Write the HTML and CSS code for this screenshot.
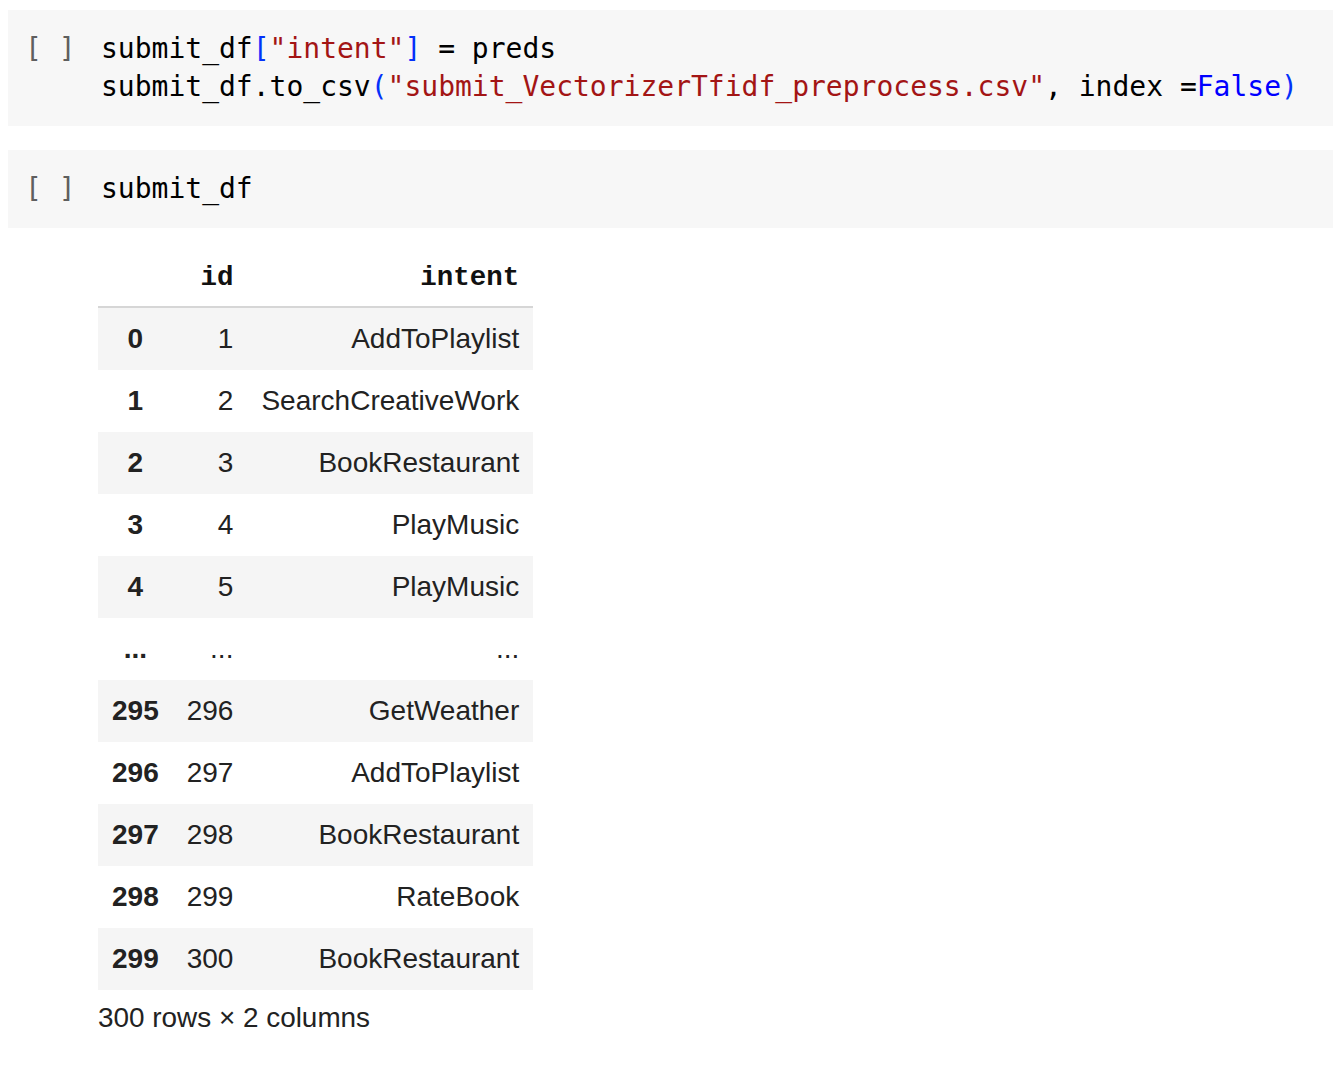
FILE: index.html
```html
<!DOCTYPE html>
<html>
<head>
<meta charset="utf-8">
<link rel="stylesheet" href="styles.css">
</head>
<body>
<div class="notebook">
  <div class="cell">
    <div class="gutter">[ ]</div>
    <div class="code">
      <div class="line">submit_df<span class="br">[</span><span class="str">"intent"</span><span class="br">]</span> = preds</div>
      <div class="line">submit_df.to_csv<span class="br">(</span><span class="str">"submit_VectorizerTfidf_preprocess.csv"</span>, index =<span class="kw">False</span><span class="br">)</span></div>
    </div>
  </div>
  <div class="cell">
    <div class="gutter">[ ]</div>
    <div class="code">
      <div class="line">submit_df</div>
    </div>
  </div>
  <div class="output">
    <table class="df">
      <thead>
        <tr><th class="idx"></th><th>id</th><th>intent</th></tr>
      </thead>
      <tbody>
        <tr><th class="idx">0</th><td>1</td><td>AddToPlaylist</td></tr>
        <tr><th class="idx">1</th><td>2</td><td>SearchCreativeWork</td></tr>
        <tr><th class="idx">2</th><td>3</td><td>BookRestaurant</td></tr>
        <tr><th class="idx">3</th><td>4</td><td>PlayMusic</td></tr>
        <tr><th class="idx">4</th><td>5</td><td>PlayMusic</td></tr>
        <tr><th class="idx">...</th><td>...</td><td>...</td></tr>
        <tr><th class="idx">295</th><td>296</td><td>GetWeather</td></tr>
        <tr><th class="idx">296</th><td>297</td><td>AddToPlaylist</td></tr>
        <tr><th class="idx">297</th><td>298</td><td>BookRestaurant</td></tr>
        <tr><th class="idx">298</th><td>299</td><td>RateBook</td></tr>
        <tr><th class="idx">299</th><td>300</td><td>BookRestaurant</td></tr>
      </tbody>
    </table>
    <p class="shape">300 rows × 2 columns</p>
  </div>
</div>
</body>
</html>
```

FILE: styles.css
```css
html, body {
  margin: 0;
  padding: 0;
  background: #ffffff;
}

.notebook {
  padding: 10px 0 0 8px;
}

.cell {
  display: flex;
  align-items: flex-start;
  background: #f7f7f7;
  padding: 20px 0 20px 0;
  margin-bottom: 24px;
}

.gutter {
  width: 93px;
  box-sizing: border-box;
  padding-left: 17px;
  font-family: "DejaVu Sans Mono", monospace;
  font-size: 28px;
  line-height: 38px;
  color: #5f5f5f;
  white-space: pre;
}

.code {
  font-family: "DejaVu Sans Mono", monospace;
  font-size: 28px;
  color: #000000;
}

.line {
  height: 38px;
  line-height: 38px;
  white-space: pre;
}

.code .str { color: #a31515; }
.code .br { color: #0431fa; }
.code .kw { color: #0000ff; }

.output {
  padding: 16px 0 0 90px;
  margin-top: -24px;
}

.df {
  border-collapse: collapse;
  font-family: "Liberation Sans", Arial, sans-serif;
  font-size: 28px;
  color: #222222;
}

.df th, .df td {
  padding: 13px 14px;
  line-height: 36px;
  text-align: right;
  white-space: nowrap;
}

.df thead th {
  padding-top: 16px;
  padding-bottom: 10px;
  font-family: "Liberation Mono", "Courier New", monospace;
  font-weight: bold;
  font-size: 27.5px;
  color: #111111;
  border-bottom: 2px solid #d6d6d6;
}

.df tbody th {
  font-weight: bold;
}

.df .idx {
  text-align: center;
}

.df tbody tr:nth-child(odd) {
  background: #f5f5f5;
}

.shape {
  margin: 10px 0 0 0;
  font-family: "Liberation Sans", Arial, sans-serif;
  font-size: 27.9px;
  line-height: 36px;
  color: #222222;
}
```
